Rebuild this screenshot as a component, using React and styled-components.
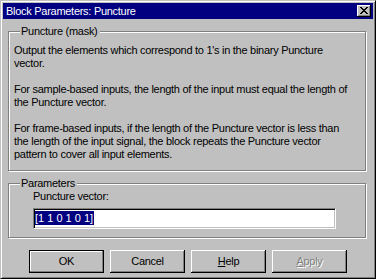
import styled, { createGlobalStyle } from "styled-components";

const GlobalStyle = createGlobalStyle`
  html, body {
    margin: 0;
    padding: 0;
    background: #c0c0c0;
  }
  body {
    font-family: "Liberation Sans", Arial, sans-serif;
    font-size: 11px;
    line-height: 13px;
    letter-spacing: -0.28px;
    color: #000;
  }
`;

const Window = styled.div`
  width: 376px;
  height: 279px;
  box-sizing: border-box;
  background: #c0c0c0;
  border-style: solid;
  border-width: 1px;
  border-color: #c0c0c0 #000 #000 #c0c0c0;
  box-shadow: inset 1px 1px 0 #fff, inset -1px -1px 0 #808080;
  padding: 2px;
  display: flex;
  flex-direction: column;
`;

const TitleBar = styled.div`
  height: 16px;
  background: #000080;
  color: #fff;
  display: flex;
  align-items: center;
  justify-content: space-between;
  padding-left: 3px;
`;

const Title = styled.span`
  white-space: nowrap;
`;

const CloseButton = styled.div`
  width: 14px;
  height: 12px;
  margin-right: 2px;
  box-sizing: border-box;
  background: #c0c0c0;
  box-shadow: inset -1px -1px 0 #000, inset 1px 1px 0 #fff, inset -2px -2px 0 #808080;
  display: flex;
  align-items: center;
  justify-content: center;
  padding-bottom: 1px;

  svg {
    display: block;
  }
`;

const Body = styled.div`
  display: flex;
  flex-direction: column;
  gap: 6px;
  padding: 6px 7px 0 5px;
`;

const Group = styled.fieldset`
  margin: 0;
  min-width: 0;
  border: 1px solid #808080;
  box-shadow: inset 1px 1px 0 #fff, 1px 1px 0 #fff;
  padding: ${(p) => p.$pad};
`;

const Legend = styled.legend`
  margin-left: 6px;
  padding: 0 2px 0 1px;
  background: #c0c0c0;
  line-height: 13px;
`;

const Description = styled.div`
  display: flex;
  flex-direction: column;
  gap: 13px;
  white-space: nowrap;

  p {
    margin: 0;
  }
`;

const Field = styled.div`
  padding-left: 19px;
`;

const Label = styled.div`
  margin-bottom: 5px;
`;

const TextBox = styled.div`
  width: 303px;
  height: 21px;
  box-sizing: border-box;
  background: #fff;
  border-style: solid;
  border-width: 1px;
  border-color: #808080 #fff #fff #808080;
  box-shadow: inset 1px 1px 0 #000, inset -1px -1px 0 #c0c0c0;
  padding: 2px 1px;
  display: flex;
  align-items: flex-start;
`;

const Selected = styled.span`
  background: #000080;
  color: #fff;
  height: 14px;
  line-height: 14px;
  padding-right: 1px;
  white-space: pre;
  letter-spacing: 0;
`;

const ButtonRow = styled.div`
  display: flex;
  justify-content: center;
  gap: 6px;
  margin-top: 12px;
`;

const Button = styled.div`
  width: 75px;
  height: 23px;
  box-sizing: border-box;
  background: #c0c0c0;
  border: ${(p) => (p.$default ? "1px solid #000" : "none")};
  box-shadow: ${(p) =>
    p.$default
      ? "inset -1px -1px 0 #808080, inset 1px 1px 0 #fff"
      : "inset -1px -1px 0 #000, inset 1px 1px 0 #fff, inset -2px -2px 0 #808080"};
  display: flex;
  align-items: center;
  justify-content: center;
  color: ${(p) => (p.$disabled ? "#808080" : "#000")};
  text-shadow: ${(p) => (p.$disabled ? "1px 1px 0 #fff" : "none")};

  u {
    text-decoration: underline;
    text-underline-offset: 1px;
  }
`;

const CloseGlyph = () => (
  <svg width="8" height="7" viewBox="0 0 8 7" shapeRendering="crispEdges">
    <path
      fill="#000"
      d="M0 0h2v1H0zM6 0h2v1H6zM1 1h2v1H1zM5 1h2v1H5zM2 2h4v1H2zM3 3h2v1H3zM2 4h4v1H2zM1 5h2v1H1zM5 5h2v1H5zM0 6h2v1H0zM6 6h2v1H6z"
    />
  </svg>
);

export default function App() {
  return (
    <>
      <GlobalStyle />
      <Window>
        <TitleBar>
          <Title>Block Parameters: Puncture</Title>
          <CloseButton>
            <CloseGlyph />
          </CloseButton>
        </TitleBar>
        <Body>
          <Group $pad="6px 4px 9px 5px">
            <Legend>Puncture (mask)</Legend>
            <Description>
              <p>
                Output the elements which correspond to 1's in the binary Puncture
                <br />
                vector.
              </p>
              <p>
                For sample-based inputs, the length of the input must equal the length of
                <br />
                the Puncture vector.
              </p>
              <p>
                For frame-based inputs, if the length of the Puncture vector is less than
                <br />
                the length of the input signal, the block repeats the Puncture vector
                <br />
                pattern to cover all input elements.
              </p>
            </Description>
          </Group>
          <Group $pad="0 4px 8px 5px">
            <Legend>Parameters</Legend>
            <Field>
              <Label>Puncture vector:</Label>
              <TextBox>
                <Selected>[1 1 0 1 0 1]</Selected>
              </TextBox>
            </Field>
          </Group>
        </Body>
        <ButtonRow>
          <Button $default>OK</Button>
          <Button>Cancel</Button>
          <Button>
            <span>
              <u>H</u>elp
            </span>
          </Button>
          <Button $disabled>
            <span>
              <u>A</u>pply
            </span>
          </Button>
        </ButtonRow>
      </Window>
    </>
  );
}
